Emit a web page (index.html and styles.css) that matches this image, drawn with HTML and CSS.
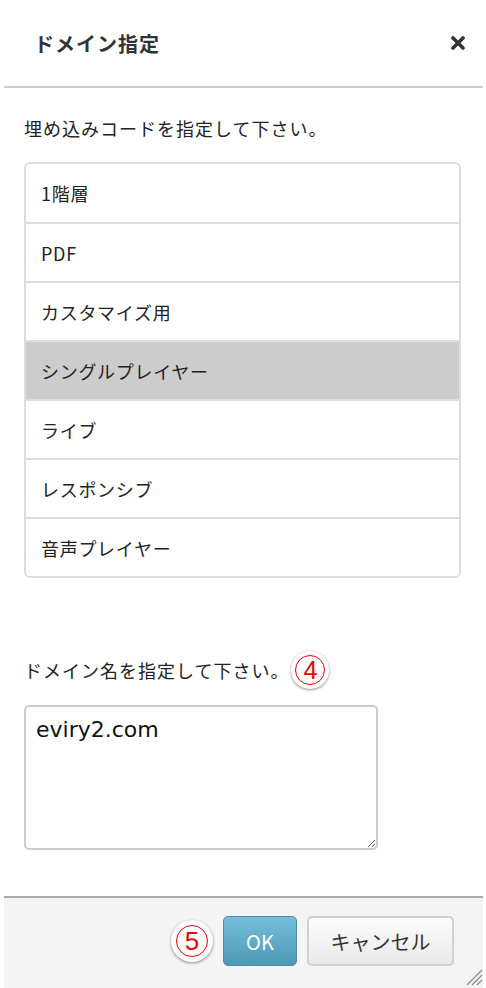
FILE: index.html
```html
<!DOCTYPE html>
<html lang="ja">

<head>
    <meta charset="UTF-8">
    <meta name="viewport" content="width=device-width, initial-scale=1.0">
    <title>ドメイン指定</title>
    <link rel="stylesheet" href="styles.css">
</head>

<body>
    <div class="dialog">
        <header class="dialog-head">
            <h1>ドメイン指定</h1>
            <button class="close" aria-label="閉じる">
                <svg width="14" height="14" viewBox="0 0 14 14">
                    <path d="M2 2 L12 12 M12 2 L2 12" stroke="#333" stroke-width="3.6" stroke-linecap="round" />
                </svg>
            </button>
        </header>

        <section class="dialog-body">
            <p class="label">埋め込みコードを指定して下さい。</p>
            <ul class="codes">
                <li>1階層</li>
                <li>PDF</li>
                <li>カスタマイズ用</li>
                <li class="valgt">シングルプレイヤー</li>
                <li>ライブ</li>
                <li>レスポンシブ</li>
                <li>音声プレイヤー</li>
            </ul>

            <p class="label domain-label">ドメイン名を指定して下さい。<span class="mark">4</span></p>
            <div class="textbox">
                <textarea>eviry2.com</textarea>
            </div>
        </section>

        <footer class="dialog-foot">
            <span class="mark mark-big">5</span>
            <button class="btn ok">OK</button>
            <button class="btn cancel">キャンセル</button>
            <svg class="grip" width="18" height="18" viewBox="0 0 18 18">
                <path d="M2 17 L17 2 M7 17 L17 7 M12 17 L17 12" stroke="#888" stroke-width="1.2" />
            </svg>
        </footer>
    </div>
</body>

</html>
```

FILE: styles.css
```css
* {
    box-sizing: border-box;
}

body {
    margin: 0;
    background: white;
    font-family: "Noto Sans CJK JP", "Noto Sans", sans-serif;
    color: #222;
}

.dialog {
    margin: 0 3px 0 4px;
    height: 988px;
    display: flex;
    flex-direction: column;
}

.dialog-head {
    height: 88px;
    display: flex;
    align-items: center;
    justify-content: space-between;
    padding: 0 18px 0 30px;
    border-bottom: 2px solid #ccc;
}

.dialog-head h1 {
    margin: 0;
    font-size: 20px;
    font-weight: bold;
    letter-spacing: 1px;
    color: #333;
}

.close {
    border: 0;
    background: none;
    padding: 0;
    display: flex;
}

.dialog-body {
    flex: 1;
    padding: 0 22px 0 20px;
}

.label {
    margin: 28px 0 0;
    font-size: 18px;
    line-height: 24px;
    letter-spacing: 1px;
    color: #222;
}

.codes {
    list-style: none;
    margin: 22px 0 0;
    padding: 0;
    border: 2px solid #ddd;
    border-radius: 6px;
    overflow: hidden;
}

.codes li {
    height: 59px;
    display: flex;
    align-items: center;
    padding-left: 15px;
    font-size: 18px;
    letter-spacing: 0.7px;
    color: #222;
    border-top: 2px solid #ddd;
}

.codes li:first-child {
    border-top: 0;
    height: 58px;
}

.codes li.valgt {
    background: #ccc;
}

.domain-label {
    margin-top: 73px;
    display: flex;
    align-items: center;
}

.mark {
    display: inline-flex;
    align-items: center;
    justify-content: center;
    width: 38px;
    height: 38px;
    margin-left: 2px;
    border-radius: 50%;
    background: white;
    box-shadow: 0 1px 3px rgba(0, 0, 0, 0.45);
    position: relative;
    color: #e00;
    font-family: "Liberation Sans", sans-serif;
    font-size: 25px;
    letter-spacing: 0;
}

.mark::before {
    content: "";
    position: absolute;
    inset: 4px;
    border: 1.5px solid #e00;
    border-radius: 50%;
}

.mark-big {
    width: 42px;
    height: 42px;
    font-size: 26px;
    margin: 0 10px 0 0;
}

.mark-big::before {
    inset: 5px;
}

.textbox {
    margin-top: 16px;
    width: 354px;
}

.textbox textarea {
    display: block;
    width: 354px;
    height: 145px;
    border: 2px solid #ccc;
    border-radius: 5px;
    padding: 10px 10px;
    font-family: "DejaVu Sans", sans-serif;
    font-size: 22px;
    color: #111;
    resize: vertical;
    outline: none;
}

.dialog-foot {
    height: 92px;
    background: #f4f4f4;
    border-top: 2px solid #aaa;
    display: flex;
    align-items: center;
    justify-content: flex-end;
    padding: 0 29px 4px 0;
    position: relative;
}

.btn {
    height: 50px;
    border-radius: 5px;
    font-family: "Noto Sans CJK JP", "Noto Sans", sans-serif;
    font-size: 20px;
    padding: 0;
}

.ok {
    width: 74px;
    color: white;
    background: linear-gradient(#76bfdc, #4b98b5);
    border: 1px solid #4d8ca6;
    margin-right: 10px;
}

.cancel {
    width: 147px;
    color: #333;
    background: linear-gradient(#fdfdfd, #e9e9e9);
    border: 2px solid #d0d0d0;
}

.grip {
    position: absolute;
    right: 0;
    bottom: 2px;
}
```
